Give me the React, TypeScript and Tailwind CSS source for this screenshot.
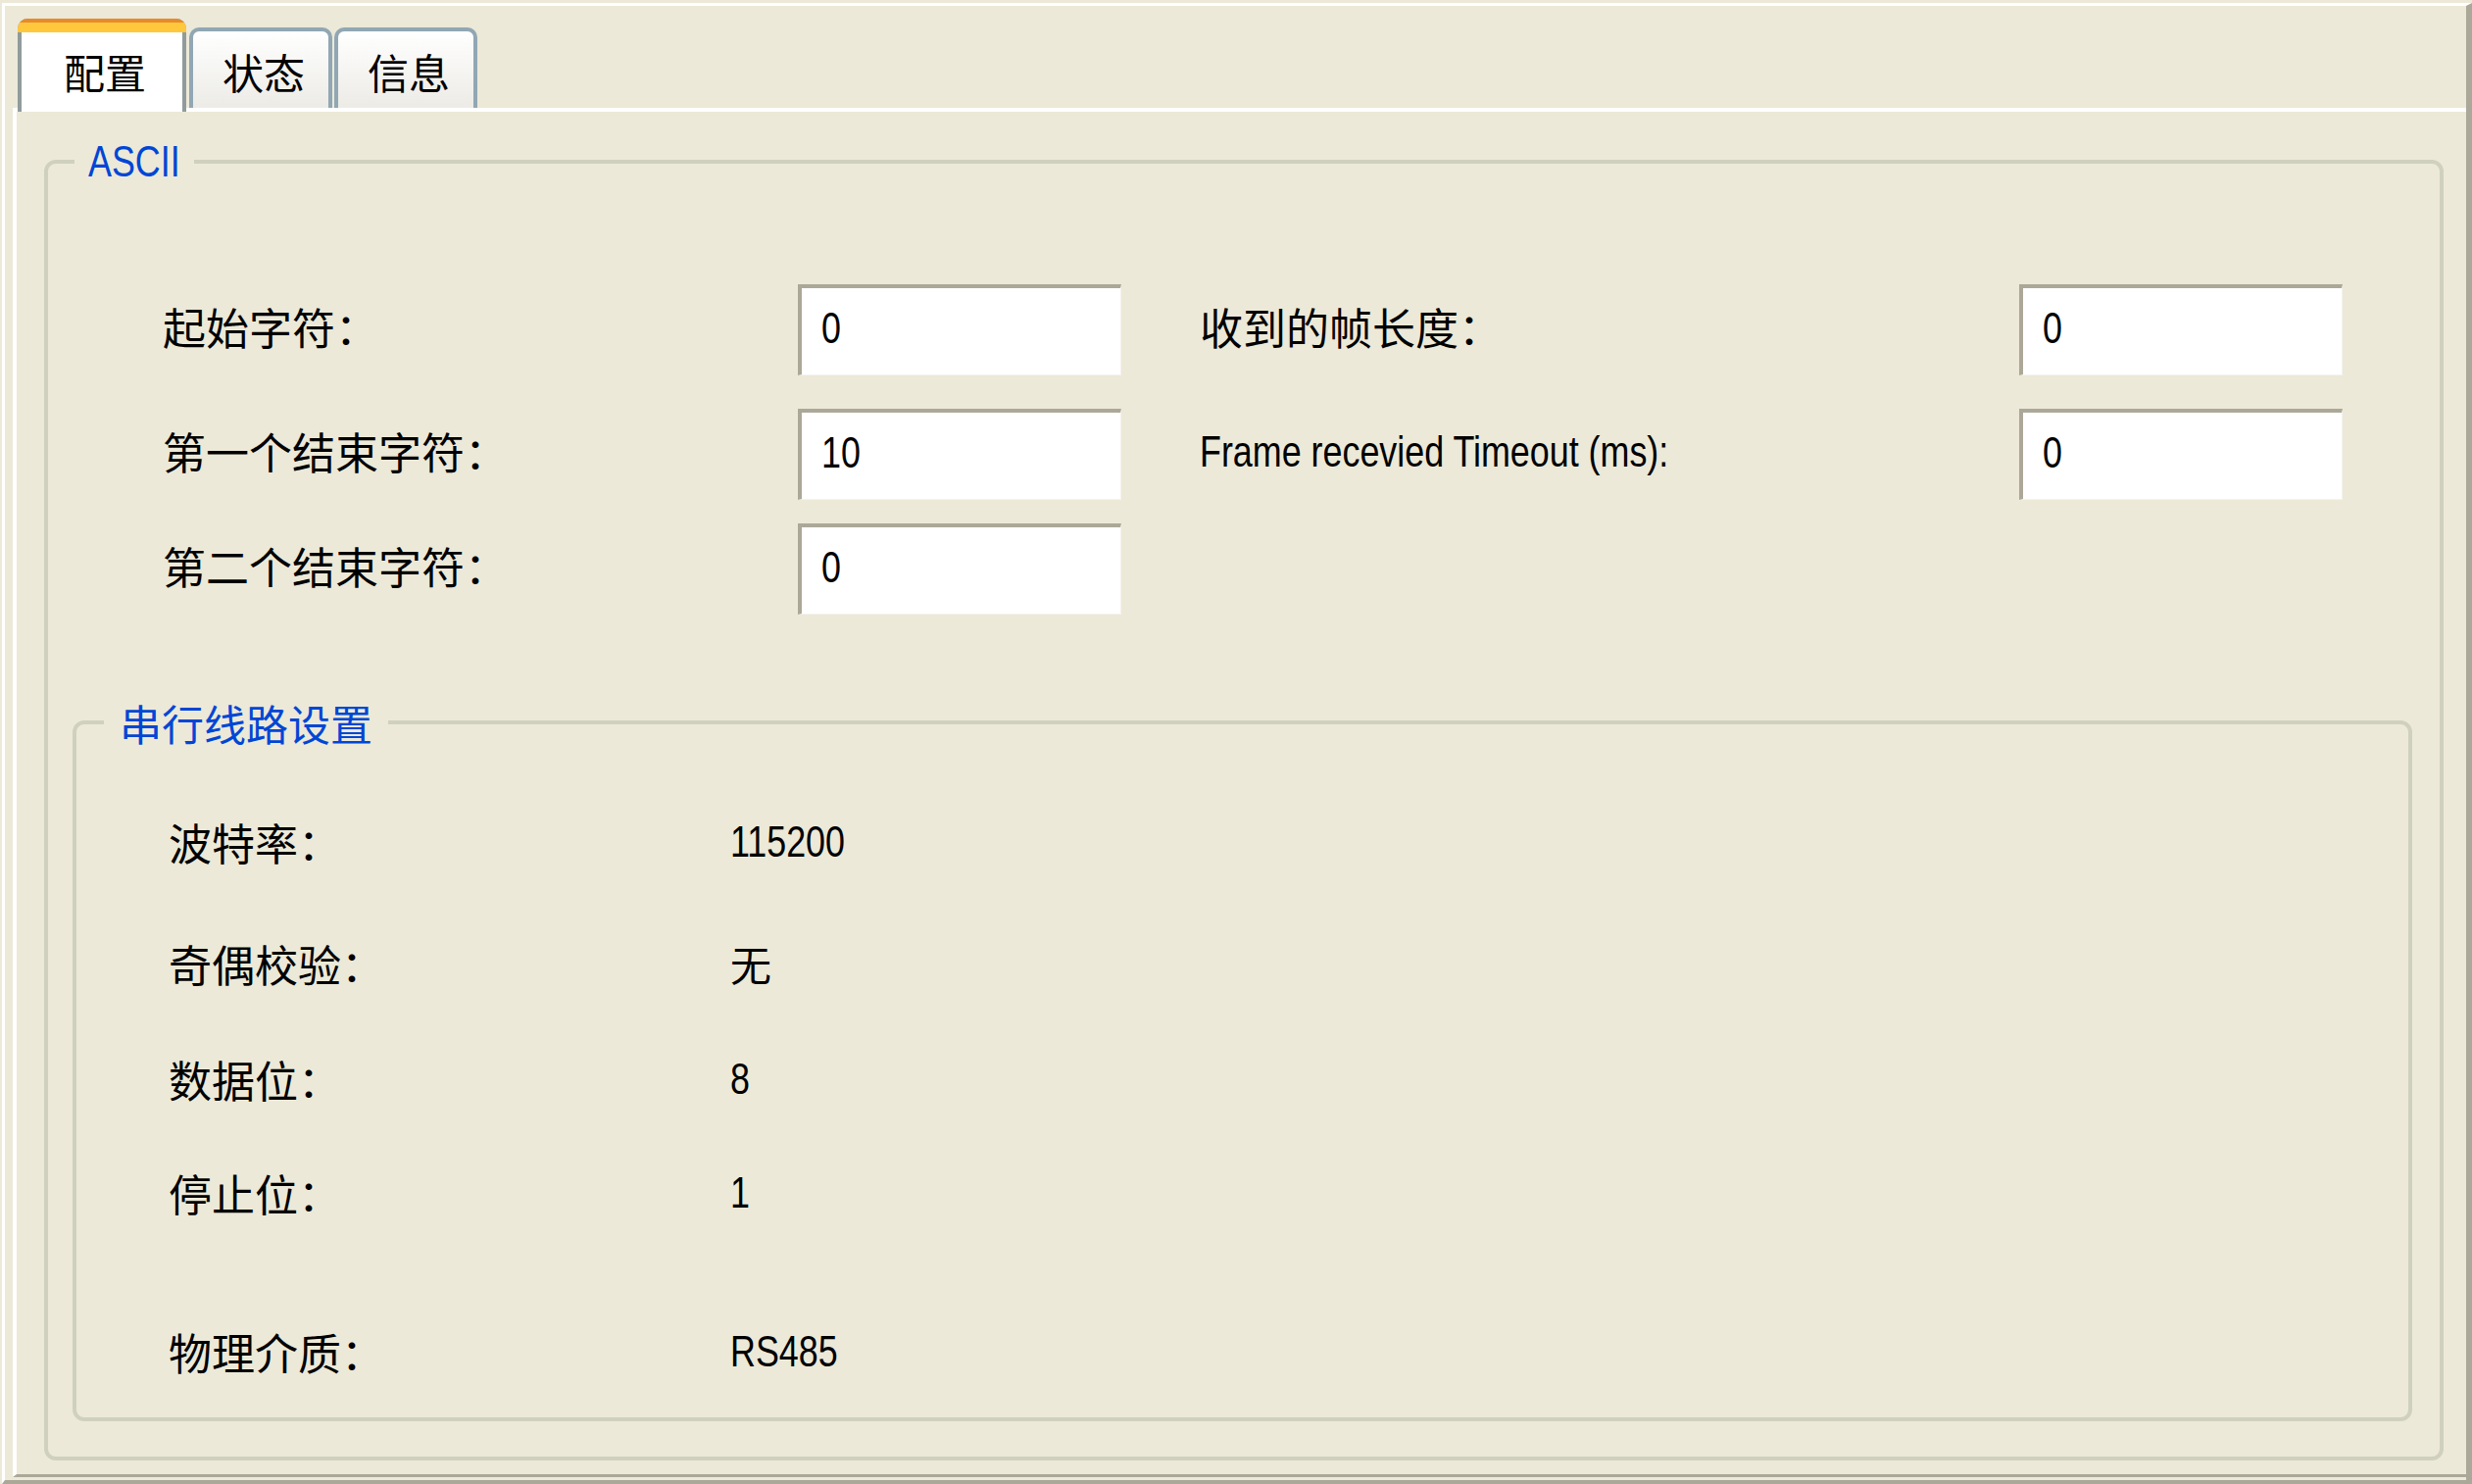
import React from 'react';

interface TabProps {
  label: string;
  active?: boolean;
}

// Arial Narrow look: Liberation Sans squeezed horizontally
function Narrow({ children }: { children: React.ReactNode }) {
  return (
    <span className="inline-block origin-left scale-x-[0.815] font-['Liberation_Sans',Arial,sans-serif] text-[44px] leading-[52px] whitespace-nowrap">
      {children}
    </span>
  );
}

function Tab({ label, active }: TabProps) {
  if (active) {
    return (
      <div className="relative z-10 -mb-[4px] ml-[5px] w-[172px] h-[95px] rounded-t-[10px] overflow-hidden flex flex-col bg-[#919b9c]">
        <div className="h-[4px] shrink-0 bg-[#e68b2c]" />
        <div className="h-[10px] shrink-0 bg-[#ffc83c]" />
        <div className="flex-1 mx-[4px] bg-white flex justify-center pt-[18px] pl-[6px] text-[42px] leading-[44px]">
          {label}
        </div>
      </div>
    );
  }
  return (
    <div className="w-[146px] h-[82px] rounded-t-[10px] border-t-4 border-x-4 border-[#91a7b4] bg-gradient-to-b from-white to-[#ecebe6] flex justify-center pt-[19px] pl-[6px] text-[42px] leading-[44px]">
      {label}
    </div>
  );
}

function Field({ value }: { value: string }) {
  return (
    <div className="w-[330px] h-[93px] shrink-0 bg-white border-t-4 border-l-4 border-t-[#aca899] border-l-[#aca899] border-r border-b border-r-[#f4f3ee] border-b-[#f4f3ee] flex items-center pl-[20px] pb-[6px]">
      <Narrow>{value}</Narrow>
    </div>
  );
}

function InfoRow({ label, value, gap, cjk }: { label: string; value: string; gap: string; cjk?: boolean }) {
  return (
    <div className={`flex items-center h-[52px] ${gap}`}>
      <div className="w-[573px] shrink-0 text-[44px] leading-[52px]">{label}</div>
      {cjk ? <span className="text-[42px] leading-[52px]">{value}</span> : <Narrow>{value}</Narrow>}
    </div>
  );
}

export default function App() {
  return (
    <div className="w-[2522px] h-[1514px] bg-[#ece9d8] pt-[3px] pl-[2px] flex flex-col text-black font-['Noto_Sans_CJK_SC',sans-serif] overflow-hidden">
      <div className="flex-1 flex flex-col border-t-[3px] border-l-[3px] border-t-white border-l-white border-r-[6px] border-b-[4px] border-r-[#aca899] border-b-[#aca899] pl-[8px] pb-[3px]">
        {/* Tabs */}
        <div className="h-[104px] shrink-0 flex items-end">
          <Tab label="配置" active />
          <div className="ml-[3px]">
            <Tab label="状态" />
          </div>
          <div className="ml-[2px]">
            <Tab label="信息" />
          </div>
        </div>

        {/* Page */}
        <div className="flex-1 border-t-4 border-l-4 border-t-white border-l-white border-b-[3px] border-b-[#aca899] pt-[25px] pl-[28px] pr-[23px]">
          <fieldset className="h-[1351px] border-4 border-[#d0d0bf] rounded-[12px]">
            <legend className="ml-[27px] px-[14px] text-[#0046d5]">
              <span className="inline-block w-[94px]">
                <Narrow>ASCII</Narrow>
              </span>
            </legend>

            <div className="pl-[117px]">
              <div className="mt-[99px] flex items-center h-[93px]">
                <div className="w-[648px] shrink-0 text-[44px] leading-[52px] pb-[8px]">起始字符：</div>
                <Field value="0" />
                <div className="ml-[80px] w-[836px] shrink-0 text-[44px] leading-[52px] pb-[8px]">收到的帧长度：</div>
                <Field value="0" />
              </div>
              <div className="mt-[34px] flex items-center h-[93px]">
                <div className="w-[648px] shrink-0 text-[44px] leading-[52px] pb-[8px]">第一个结束字符：</div>
                <Field value="10" />
                <div className="ml-[80px] w-[836px] shrink-0 pb-[6px]">
                  <Narrow>Frame recevied Timeout (ms):</Narrow>
                </div>
                <Field value="0" />
              </div>
              <div className="mt-[24px] flex items-center h-[93px]">
                <div className="w-[648px] shrink-0 text-[44px] leading-[52px] pb-[8px]">第二个结束字符：</div>
                <Field value="0" />
              </div>
            </div>

            <fieldset className="mt-[84px] ml-[25px] mr-[28px] h-[739px] border-4 border-[#d0d0bf] rounded-[12px]">
              <legend className="ml-[28px] px-[16px] text-[#0046d5] text-[43px] leading-[52px]">串行线路设置</legend>
              <div className="pl-[94px]">
                <InfoRow label="波特率：" value="115200" gap="mt-[70px]" />
                <InfoRow label="奇偶校验：" value="无" gap="mt-[72px]" cjk />
                <InfoRow label="数据位：" value="8" gap="mt-[66px]" />
                <InfoRow label="停止位：" value="1" gap="mt-[64px]" />
                <InfoRow label="物理介质：" value="RS485" gap="mt-[110px]" />
              </div>
            </fieldset>
          </fieldset>
        </div>
      </div>
    </div>
  );
}
